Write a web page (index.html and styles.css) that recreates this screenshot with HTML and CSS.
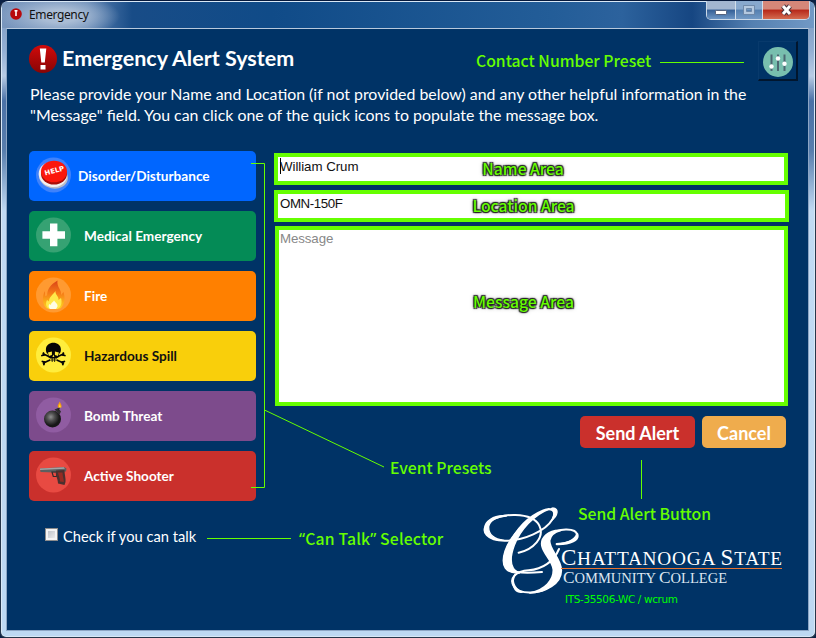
FILE: index.html
```html
<!DOCTYPE html>
<html lang="en">
<head>
<meta charset="utf-8">
<title>Emergency</title>
<link rel="stylesheet" href="styles.css">
</head>
<body>
<div class="window">
  <header class="titlebar">
    <svg class="app-icon" viewBox="0 0 12 12"><circle cx="6" cy="6" r="5.8" fill="#b8090c"/><path d="M4.5 2h3v1.6H6.8V8H5.2V3.6h-.7z" fill="#fff"/></svg>
    <span class="caption">Emergency</span>
    <div class="controls">
      <button class="ctl min" aria-label="Minimize"><svg viewBox="0 0 28 18"><rect x="8.5" y="9.5" width="11" height="4" rx=".7" fill="#fff" stroke="#54617c"/></svg></button>
      <button class="ctl max" aria-label="Maximize"><svg viewBox="0 0 26 18"><path d="M7.5 4.500h11v9h-11zM10.500 7.500v3h5v-3z" fill="#b4c8df" fill-rule="evenodd" stroke="#647e9e" stroke-width=".8"/></svg></button>
      <button class="ctl close" aria-label="Close"><svg viewBox="0 0 46 18"><path d="M20 5l7 8M27 5l-7 8" stroke="#49333c" stroke-width="5"/><path d="M20 5l7 8M27 5l-7 8" stroke="#fff" stroke-width="3"/></svg></button>
    </div>
  </header>
  <main class="client">
    <div class="heading">
      <svg class="alert-icon" viewBox="0 0 28 28"><defs><linearGradient id="red" x2="0" y2="1"><stop stop-color="#d20a0a"/><stop offset="1" stop-color="#870505"/></linearGradient></defs><circle cx="14" cy="14" r="14" fill="url(#red)"/><path d="M10.800 3.500h6.500l-1.500 14h-3.500zM11.500 20h5v4.500h-5z" fill="#fff"/></svg>
      <h1>Emergency Alert System</h1>
      <button class="settings" aria-label="Contact number preset"><svg viewBox="0 0 30 30"><circle cx="15" cy="15" r="15" fill="#78bfae"/><path d="M8.500 7.500V24M15 7.500V24M21.500 7.500V24" stroke="#4c6872" stroke-width="2"/><g fill="#fff"><circle cx="8.500" cy="19.500" r="2.200"/><circle cx="15" cy="11.500" r="2.200"/><circle cx="21.500" cy="16.700" r="2.200"/></g></svg></button>
    </div>
    <p class="intro"><span class="l1">Please provide your Name and Location (if not provided below) and any other helpful information in the</span><br><span class="l2">"Message" field. You can click one of the quick icons to populate the message box.</span></p>
    <div class="columns">
      <nav class="presets">
        <button class="preset disorder"><svg viewBox="0 0 36 36"><circle cx="17.500" cy="18" r="17.500" fill="#3f82fb"/><ellipse cx="17.500" cy="20" rx="14.500" ry="11.500" fill="#b9bbc8" transform="rotate(12 17.500 20)"/><ellipse cx="17" cy="17.500" rx="14.300" ry="12.500" fill="#f3f0f0" transform="rotate(12 17 17)"/><ellipse cx="18" cy="17" rx="13" ry="10.500" fill="#a90d08"/><ellipse cx="18" cy="14.500" rx="13" ry="10.800" fill="#fb170d"/><text x="18.500" y="16" text-anchor="middle" transform="rotate(-15 18.500 14)" font-size="6.800" textLength="20" lengthAdjust="spacingAndGlyphs" font-family="DejaVu Sans" font-weight="bold" fill="#fff">HELP</text></svg><span>Disorder/Disturbance</span></button>
        <button class="preset medical"><svg viewBox="0 0 36 36"><circle cx="17.500" cy="18" r="17.500" fill="#36a273"/><path d="M14 6.500h7.400v7.700H29v7.500h-7.600v7.600H14v-7.600H6.400v-7.500H14z" fill="#fff"/></svg><span>Medical Emergency</span></button>
        <button class="preset fire"><svg viewBox="0 0 36 36"><defs><linearGradient id="flame" x2="0" y2="1"><stop stop-color="#d94318"/><stop offset=".45" stop-color="#f57a16"/><stop offset="1" stop-color="#ffd31e"/></linearGradient></defs><circle cx="17.500" cy="18" r="17.500" fill="#ff9a31"/><path d="M21.500 3.500C20.500 10 26 13 25 18l2.500-3C30 23 27.500 29 24 31.500H11C6.500 28 5.500 20 9 14v5l2-.5C11.500 12 14 8 21.500 3.500z" fill="url(#flame)"/><path d="M19.500 14C19 18 23 19 22.500 23l2.500-2c1.500 5 0 9-3.500 11h-8c-4-2-4-6-2.500-9l2 1.500C13 20 16 19 19.500 14z" fill="#ffe94a"/><path d="M18 23c0 2 4 3 3.500 6.500L20 32h-6c-2-2-1.500-4-.5-5l1.500 1c0-3 3-3 3-5z" fill="#fffde4"/></svg><span>Fire</span></button>
        <button class="preset hazard"><svg viewBox="0 0 36 36"><circle cx="17.500" cy="18" r="17.500" fill="#ffed3c"/><g transform="translate(-.6)"><g stroke="#050505" stroke-width="1.800" stroke-linecap="round" fill="none"><path d="M8 17l20 9M28 17L8 26"/><path d="M6.500 18.500l2-.5-.5-2M29.500 18.500l-2-.5.5-2M7 24.500l2 .5-.5 2.500M29 24.500l-2 .5.500 2.500"/></g><path d="M10.500 12.500c0-9 15-9 15 0 0 2-.5 3.500-2 4.500v3l-2 1v3h-7v-3l-2-1v-3c-1.500-1-2-2.500-2-4.500z" fill="#050505"/><path d="M12.500 15.500l4-1v3.500l-3 1zM23.500 15.500l-4-1v3.500l3 1zM18 17.500l1 2.500h-2zM14.500 21.500h7l-1 4h-5z" fill="#ffed3c"/><path d="M15.500 23h5M16.800 21v4M19.200 21v4" stroke="#050505" stroke-width=".8"/></g></svg><span>Hazardous Spill</span></button>
        <button class="preset bomb"><svg viewBox="0 0 36 36"><defs><radialGradient id="ball" cx=".4" cy=".38"><stop stop-color="#909090"/><stop offset=".45" stop-color="#505050"/><stop offset="1" stop-color="#171717"/></radialGradient></defs><circle cx="17.500" cy="18" r="17.500" fill="#905ca2"/><circle cx="16.500" cy="22" r="8.500" fill="url(#ball)"/><path d="M18.500 12.500l3.500-1.500 3 3.500-1.500 3z" fill="#303030"/><path d="M22.500 13.500c-.5-3 1.500-2 1.500-4" stroke="#222" stroke-width="1.200" fill="none"/><path d="M23.500 4.500c1 2 2.500 3 2 6h-3.500C21 8 23 7 23.500 4.500z" fill="#f59b11"/><path d="M23.800 7l1 3.500h-2z" fill="#ffe647"/></svg><span>Bomb Threat</span></button>
        <button class="preset shooter"><svg viewBox="0 0 36 36"><circle cx="17.500" cy="18" r="17.500" fill="#e84a42"/><path d="M4 11.500l24-1.500 2.500 1.500-.5 3-11.500 1-14-.5z" fill="#5d5f60"/><path d="M4 11.500l24-1.300.8 1.500L4 13z" fill="#a5a5a5"/><path d="M16 15h5.500l-1 4.500h-3.200z" fill="none" stroke="#332b2c" stroke-width="1.200"/><path d="M20 13.500l8.500-.5c0 5 1.500 8 1 12l-1 3-6.500-1.500c0-5-3-8-2-13z" fill="#4b302f"/><path d="M22 15.500h4.500c0 4 1.500 7 1.300 9.500l-3.800-.5c0-4-2-7-2-9z" fill="#942b23"/></svg><span>Active Shooter</span></button>
        <label class="talk"><i></i><span>Check if you can talk</span></label>
      </nav>
      <section class="form">
        <div class="field name"><span class="value">William Crum</span><b>Name Area</b></div>
        <div class="field location"><span class="value">OMN-150F</span><b>Location Area</b></div>
        <div class="field message"><span class="value">Message</span><b>Message Area</b></div>
        <div class="actions"><button class="send"><span>Send Alert</span></button><button class="cancel"><span>Cancel</span></button></div>
        <div class="brand">
          <svg class="monogram" viewBox="0 0 300 285" fill="none" stroke="#fff" stroke-linecap="round" stroke-linejoin="round">
            <path stroke-width="6" d="M116 158C160 148 195 112 178 77C158 35 57 37 26 67C-3 96 24 122 74 122C132 122 197 93 218 57C231 31 213 22 190 31C138 52 105 95 87 137C74 170 73 211 111 216C135 220 162 218 186 216"/>
            <path stroke-width="4" fill="#fff" d="M208 27C150 43 91 104 75 153C60 199 78 222 118 219C91 207 88 176 103 136C120 90 162 44 208 27z"/>
            <path stroke-width="4" fill="#fff" d="M213 26C224 27 226 39 216 60C232 49 239 25 218 24zM15 89C19 113 45 122 72 121C42 117 25 106 26 80C29 60 55 48 79 48C42 43 10 65 15 89z"/>
            <path stroke-width="6" d="M230 132C264 131 292 119 291 105C289 82 231 84 209 106C190 126 207 151 224 174C242 207 238 242 205 262C172 284 119 282 103 261C84 235 109 213 146 211C188 208 222 184 237 147"/>
            <path stroke-width="5" fill="#fff" d="M242 91C206 89 180 113 186 139C192 164 218 184 220 209C221 240 196 269 150 279C198 276 244 252 244 211C243 174 206 148 209 121C211 105 224 96 242 91zM106 223C93 238 100 268 127 276C103 281 90 247 106 223zM230 133C272 134 300 120 292 101C282 125 258 129 230 133z"/>
          </svg>
          <div class="wordmark"><div class="state">C<small>HATTANOOGA </small>S<small>TATE</small></div><div class="college">C<small>OMMUNITY </small>C<small>OLLEGE</small></div><div class="machine">ITS-35506-WC / wcrum</div></div>
        </div>
      </section>
    </div>
  </main>
  <div class="annotations">
    <svg viewBox="0 0 816 638" fill="none" stroke="#6f0" stroke-width="1"><path d="M660 62.500h84M251 163.500h13.500v324H251M264.500 410L384 467M207 538.500h84M641.500 460v39"/></svg>
    <span class="note contact">Contact Number Preset</span>
    <span class="note events">Event Presets</span>
    <span class="note selector"><q>Can Talk</q> Selector</span>
    <span class="note alert">Send Alert Button</span>
  </div>
</div>
</body>
</html>
```
FILE: styles.css
```css
* { box-sizing: border-box; }
body { margin: 0; background: #0b2145; }
button { font: inherit; border: 0; padding: 0; text-align: left; color: inherit; }
svg { display: block; flex: none; }
span { white-space: nowrap; }

.window {
  position: relative;
  width: 816px;
  height: 638px;
  padding: 1px 6px 6px 5px;
  border: 1px solid #26364b;
  border-top-color: #06193c;
  border-radius: 8px 8px 6px 6px;
  overflow: hidden;
  background: linear-gradient(#7895bd 0, #94b0d4 50px, #b8cce5 75px, #4a71a6 100px, #587ead 150px, #c1daf3 210px, #bdd8f2 630px);
  box-shadow: inset 0 0 0 1px #d9e8f6;
}
.titlebar {
  display: flex;
  height: 26px;
  margin: 0 -5px 0 -4px;
  padding-left: 8px;
  background: radial-gradient(ellipse 60px 22px at 58px 14px, #aabdd5 30%, transparent), linear-gradient(90deg, #7996bd 0, #5f84b3 85px, #184c87 130px, #104b88 270px, #235d98 550px, #2c629d 620px, #164682 690px, #5480b1 750px, #7299c5);
}
.app-icon { width: 12px; height: 12px; margin-top: 6px; }
.caption { margin: 4px 0 0 7px; font: 12px/18px "Noto Sans", sans-serif; color: #111; letter-spacing: -.38px; }
.controls { display: flex; height: 19px; margin: -1px 4px 0 auto; border: 1px solid #cbd9e8; border-top: 0; border-radius: 0 0 5px 5px; overflow: hidden; }
.ctl { height: 18px; border-right: 1px solid #d2deea; }
.ctl svg { height: 18px; width: 100%; }
.min { width: 29px; background: linear-gradient(#a3b6d0 45%, #345f96 50%, #6c95c4); }
.max { width: 27px; background: linear-gradient(#88a8cd 45%, #547fb0 50%, #7299c4); }
.close { width: 46px; border: 0; background: linear-gradient(#d58779 45%, #b62719 50%, #d46b50); }

.client {
  height: 603px;
  width: 803px;
  background: #036;
  border: 1px solid #8ca5c4;
  border-top-color: #b9c9dc;
  color: #fff;
  font-family: Lato, sans-serif;
  padding: 12px 10px 0 22px;
}
.heading { display: flex; align-items: flex-start; height: 42px; }
.alert-icon { width: 28px; height: 28px; margin-top: 4px; }
h1 { margin: 3px 0 0 5px; font-size: 21.500px; line-height: 28px; font-weight: 700; white-space: nowrap; }
.settings { margin-left: auto; width: 40px; height: 40px; padding: 5px 4px; background: #036; border: 1px solid #083a6c; border-right: 2px solid #01162e; border-bottom: 2px solid #01162e; }
.settings svg { width: 30px; height: 30px; }
.intro { margin: 0 0 0 1px; height: 68px; font-size: 15.900px; line-height: 21px; }
.columns { display: grid; grid-template-columns: 227px 514px; column-gap: 19px; }
.presets { display: grid; grid-auto-rows: 50px; row-gap: 10px; }
.preset { display: flex; align-items: flex-start; border-radius: 5px; padding: 6px 0 0 7px; font-size: 13.600px; font-weight: 700; }
.preset svg { width: 36px; height: 36px; }
.preset span { margin: 9px 0 0 12px; line-height: 20px; }
.disorder { background: #06f; }
.disorder span { margin-left: 6px; }
.medical { background: #048b56; }
.fire { background: #ff8000; }
.hazard { background: #f9cf0b; color: #111; }
.bomb { background: #7d4b8c; }
.shooter { background: #ca302c; }
.talk { display: flex; align-items: flex-start; padding: 17px 0 0 16px; font-size: 14.700px; }
.talk i { width: 13px; height: 13px; border: 1px solid #8c8c8c; box-shadow: inset 0 0 0 2px #f4f4f4; background: linear-gradient(135deg, #b4b9c1, #f5f5f5); }
.talk span { margin: -2px 0 0 5px; line-height: 20px; }

.form { padding-top: 2px; }
.field { position: relative; height: 32px; border: 4px solid #6f0; background: #fff; color: #111; font: 13.300px/15px "Liberation Sans", sans-serif; padding-left: 1px; }
.field .value { display: block; padding-top: 3px; }
.name { margin: 0 1px 0 -1px; }
.name .value { margin-top: -1px; padding-left: 1px; letter-spacing: -.05px; }
.name::before { content: ""; position: absolute; left: 2px; top: 1px; width: 1px; height: 16px; background: #000; }
.location { margin: 5px 0 0 -1px; }
.location .value { margin-top: -1px; padding-left: 1px; letter-spacing: -.4px; }
.message { height: 180px; margin: 4px 1px 0 0; color: #888; }
.message .value { padding-top: 1px; letter-spacing: -.1px; }
.field b { position: absolute; left: 50%; top: 50%; transform: translate(-50%, -50%); margin-left: -8px; white-space: nowrap; font: 500 15.700px/20px "Noto Sans CJK SC", sans-serif; color: #6f0; text-shadow: -1px -1px 1px #222, 1px -1px 1px #222, -1px 1px 1px #222, 1px 1px 1px #222, 0 0 4px #777; }
.message b { margin-top: -14px; }
.actions { display: flex; justify-content: flex-end; gap: 7px; margin: 10px 3px 0 0; }
.actions button { height: 32px; border-radius: 5px; font-size: 18px; font-weight: 700; line-height: 34px; text-align: center; }
.send { width: 115px; background: #ca302c; }
.cancel { width: 84px; background: #efac4d; }
.brand { display: flex; width: 310px; margin: 52px 0 0 205px; height: 100px; }
.monogram { width: 100px; height: 95px; }
.wordmark { margin: 49px 0 0 -19px; font-family: "Liberation Serif", serif; white-space: nowrap; }
.wordmark small { font-size: .84em; }
.state { width: 221px; height: 20px; font-size: 23px; letter-spacing: .75px; line-height: 18px; border-bottom: 1px solid #e87431; }
.college { font-size: 17.300px; line-height: 18px; height: 19px; margin-left: 2px; color: #dce6f1; }
.machine { margin: 4px 0 0 4px; color: #0f0; font: 10.500px/14px "DejaVu Sans", sans-serif; letter-spacing: -.38px; }

.annotations { position: absolute; inset: -1px; pointer-events: none; }
.annotations svg { width: 816px; height: 638px; }
.note { position: absolute; color: #6f0; font: 500 15.750px/24px "Noto Sans CJK SC", sans-serif; }
.note q { quotes: none; }
.note q::before, .note q::after { font-family: "Noto Sans", sans-serif; }
.note q::before { content: "“"; }
.note q::after { content: "”"; }
.contact { left: 476px; top: 49px; }
.events { left: 390px; top: 456px; }
.selector { left: 299px; top: 527px; letter-spacing: .15px; }
.alert { left: 578px; top: 502px; }
```
